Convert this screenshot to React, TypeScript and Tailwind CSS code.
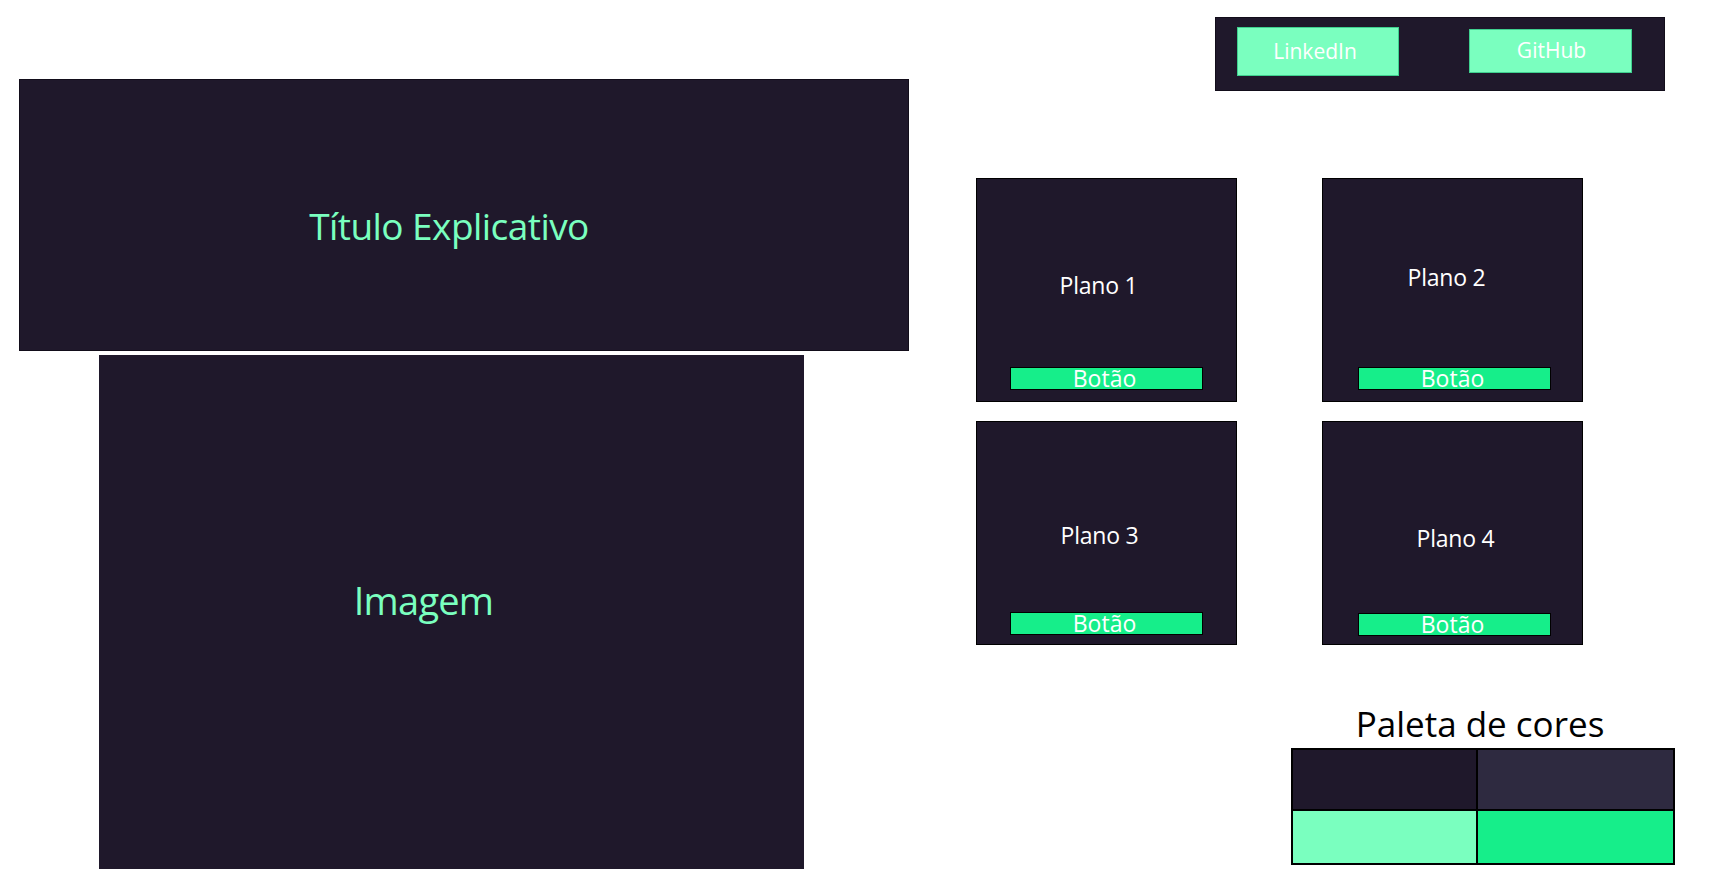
const plans = [
  { name: 'Plano 1', label: 'pt-[24px] pr-[16px]', btn: 'ml-[33px] mb-[11px]' },
  { name: 'Plano 2', label: 'pt-[8px] pr-[12px]', btn: 'ml-[35px] mb-[11px]' },
  { name: 'Plano 3', label: 'pt-[36px] pr-[14px]', btn: 'ml-[33px] mb-[9px]' },
  { name: 'Plano 4', label: 'pt-[42px] pl-[6px]', btn: 'ml-[35px] mb-[8px]' },
]

export default function App() {
  return (
    <div className="min-h-screen bg-white flex font-['Open_Sans',sans-serif]">
      {/* left column */}
      <div className="w-[909px] shrink-0 pl-[19px] pt-[79px] flex flex-col">
        <div className="w-[890px] h-[272px] bg-[#1f182b] border border-[#120d1a] flex items-center justify-center pt-[20px] pr-[30px]">
          <h1 className="text-[37px] leading-none text-[#7affbf] tracking-[-0.015em]">Título Explicativo</h1>
        </div>
        <div className="ml-[80px] mt-[4px] w-[705px] h-[514px] bg-[#1f182b] flex items-center justify-center pr-[56px] pb-[24px]">
          <span className="text-[38px] leading-none text-[#7affbf] tracking-[-0.02em]">Imagem</span>
        </div>
      </div>

      {/* right column */}
      <div className="ml-[67px] pt-[17px] flex flex-col w-[700px]">
        <nav className="ml-[239px] w-[450px] h-[74px] bg-[#1f182b] border border-[#120d1a] flex items-start pl-[21px]">
          <a className="mt-[9px] w-[162px] h-[49px] bg-[#7affbf] border border-[#3fd08f] flex items-center justify-center pr-[6px] text-white text-[21px]">
            LinkedIn
          </a>
          <a className="ml-[70px] mt-[11px] w-[163px] h-[44px] bg-[#7affbf] border border-[#3fd08f] flex items-center justify-center pl-[2px] text-white text-[21px]">
            GitHub
          </a>
        </nav>

        <div className="mt-[87px] grid grid-cols-[261px_261px] gap-x-[85px] gap-y-[19px]">
          {plans.map((p) => (
            <div key={p.name} className="h-[224px] bg-[#1f182b] border border-black flex flex-col">
              <div className={`flex-1 flex items-center justify-center ${p.label}`}>
                <span className="text-white text-[23px] leading-none tracking-[-0.01em]">{p.name}</span>
              </div>
              <button className={`self-start w-[193px] h-[23px] bg-[#16ee8a] border border-black flex items-center justify-center pr-[4px] text-white text-[23px] leading-none ${p.btn}`}>
                Botão
              </button>
            </div>
          ))}
        </div>

        <div className="ml-[315px] mt-[61px] w-[384px] flex flex-col">
          <h2 className="text-[35px] leading-none text-black text-center pr-[6px]">Paleta de cores</h2>
          <div className="mt-[7px] bg-black p-[2px] grid gap-[2px] grid-cols-[183px_195px] grid-rows-[59px_52px]">
            <div className="bg-[#1f182b]" />
            <div className="bg-[#2e2a40]" />
            <div className="bg-[#7affbf]" />
            <div className="bg-[#16ee8a]" />
          </div>
        </div>
      </div>
    </div>
  )
}
